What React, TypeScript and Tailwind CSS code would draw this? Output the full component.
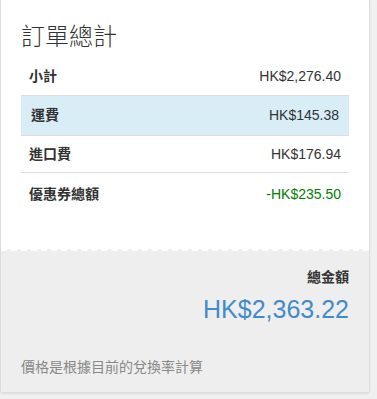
import React from "react";

const font = { fontFamily: '"Liberation Sans", Arial, "Noto Sans CJK TC", sans-serif' };

export default function App() {
  return (
    <div className="w-[377px] h-[399px] bg-[#f0f0f0] overflow-hidden" style={font}>
      <div className="w-[370px] bg-white border-x border-b border-[#dcdcdc] rounded-b-[3px] shadow-[0_1px_2px_rgba(0,0,0,0.08)]">
        <div className="px-[20px] pt-[20px]">
          <h2 className="text-[24px] leading-[30px] text-[#333] h-[37px]" style={{ fontFamily: '"Noto Sans CJK TC", sans-serif', fontWeight: 300 }}>
            訂單總計
          </h2>
          <div className="text-[14px] text-[#333]">
            <div className="h-[38px] flex items-center justify-between px-[8px]">
              <span className="font-bold">小計</span>
              <span>HK$2,276.40</span>
            </div>
            <div className="h-[41px] flex items-center justify-between px-[10px] bg-[#d9edf7] border-y border-[#dddddd]">
              <span className="font-bold">運費</span>
              <span>HK$145.38</span>
            </div>
            <div className="h-[37px] flex items-center justify-between px-[8px] border-b border-[#dddddd]">
              <span className="font-bold">進口費</span>
              <span>HK$176.94</span>
            </div>
            <div className="h-[38px] flex items-center justify-between px-[8px] pt-[5px]">
              <span className="font-bold">優惠券總額</span>
              <span className="text-[#008000]">-HK$235.50</span>
            </div>
          </div>
        </div>
        <div className="h-[38px]" />
        <div className="bg-[#eeeeee] border-t-2 border-dashed border-white px-[20px] pt-[16px] pb-[15px]">
          <div className="text-right text-[14px] leading-[20px] font-bold text-[#333]">總金額</div>
          <div className="text-right text-[25px] leading-[30px] text-[#428bca] mt-[7px]">HK$2,363.22</div>
          <div className="text-[14px] leading-[20px] text-[#888] mt-[33px]">價格是根據目前的兌換率計算</div>
        </div>
      </div>
    </div>
  );
}
